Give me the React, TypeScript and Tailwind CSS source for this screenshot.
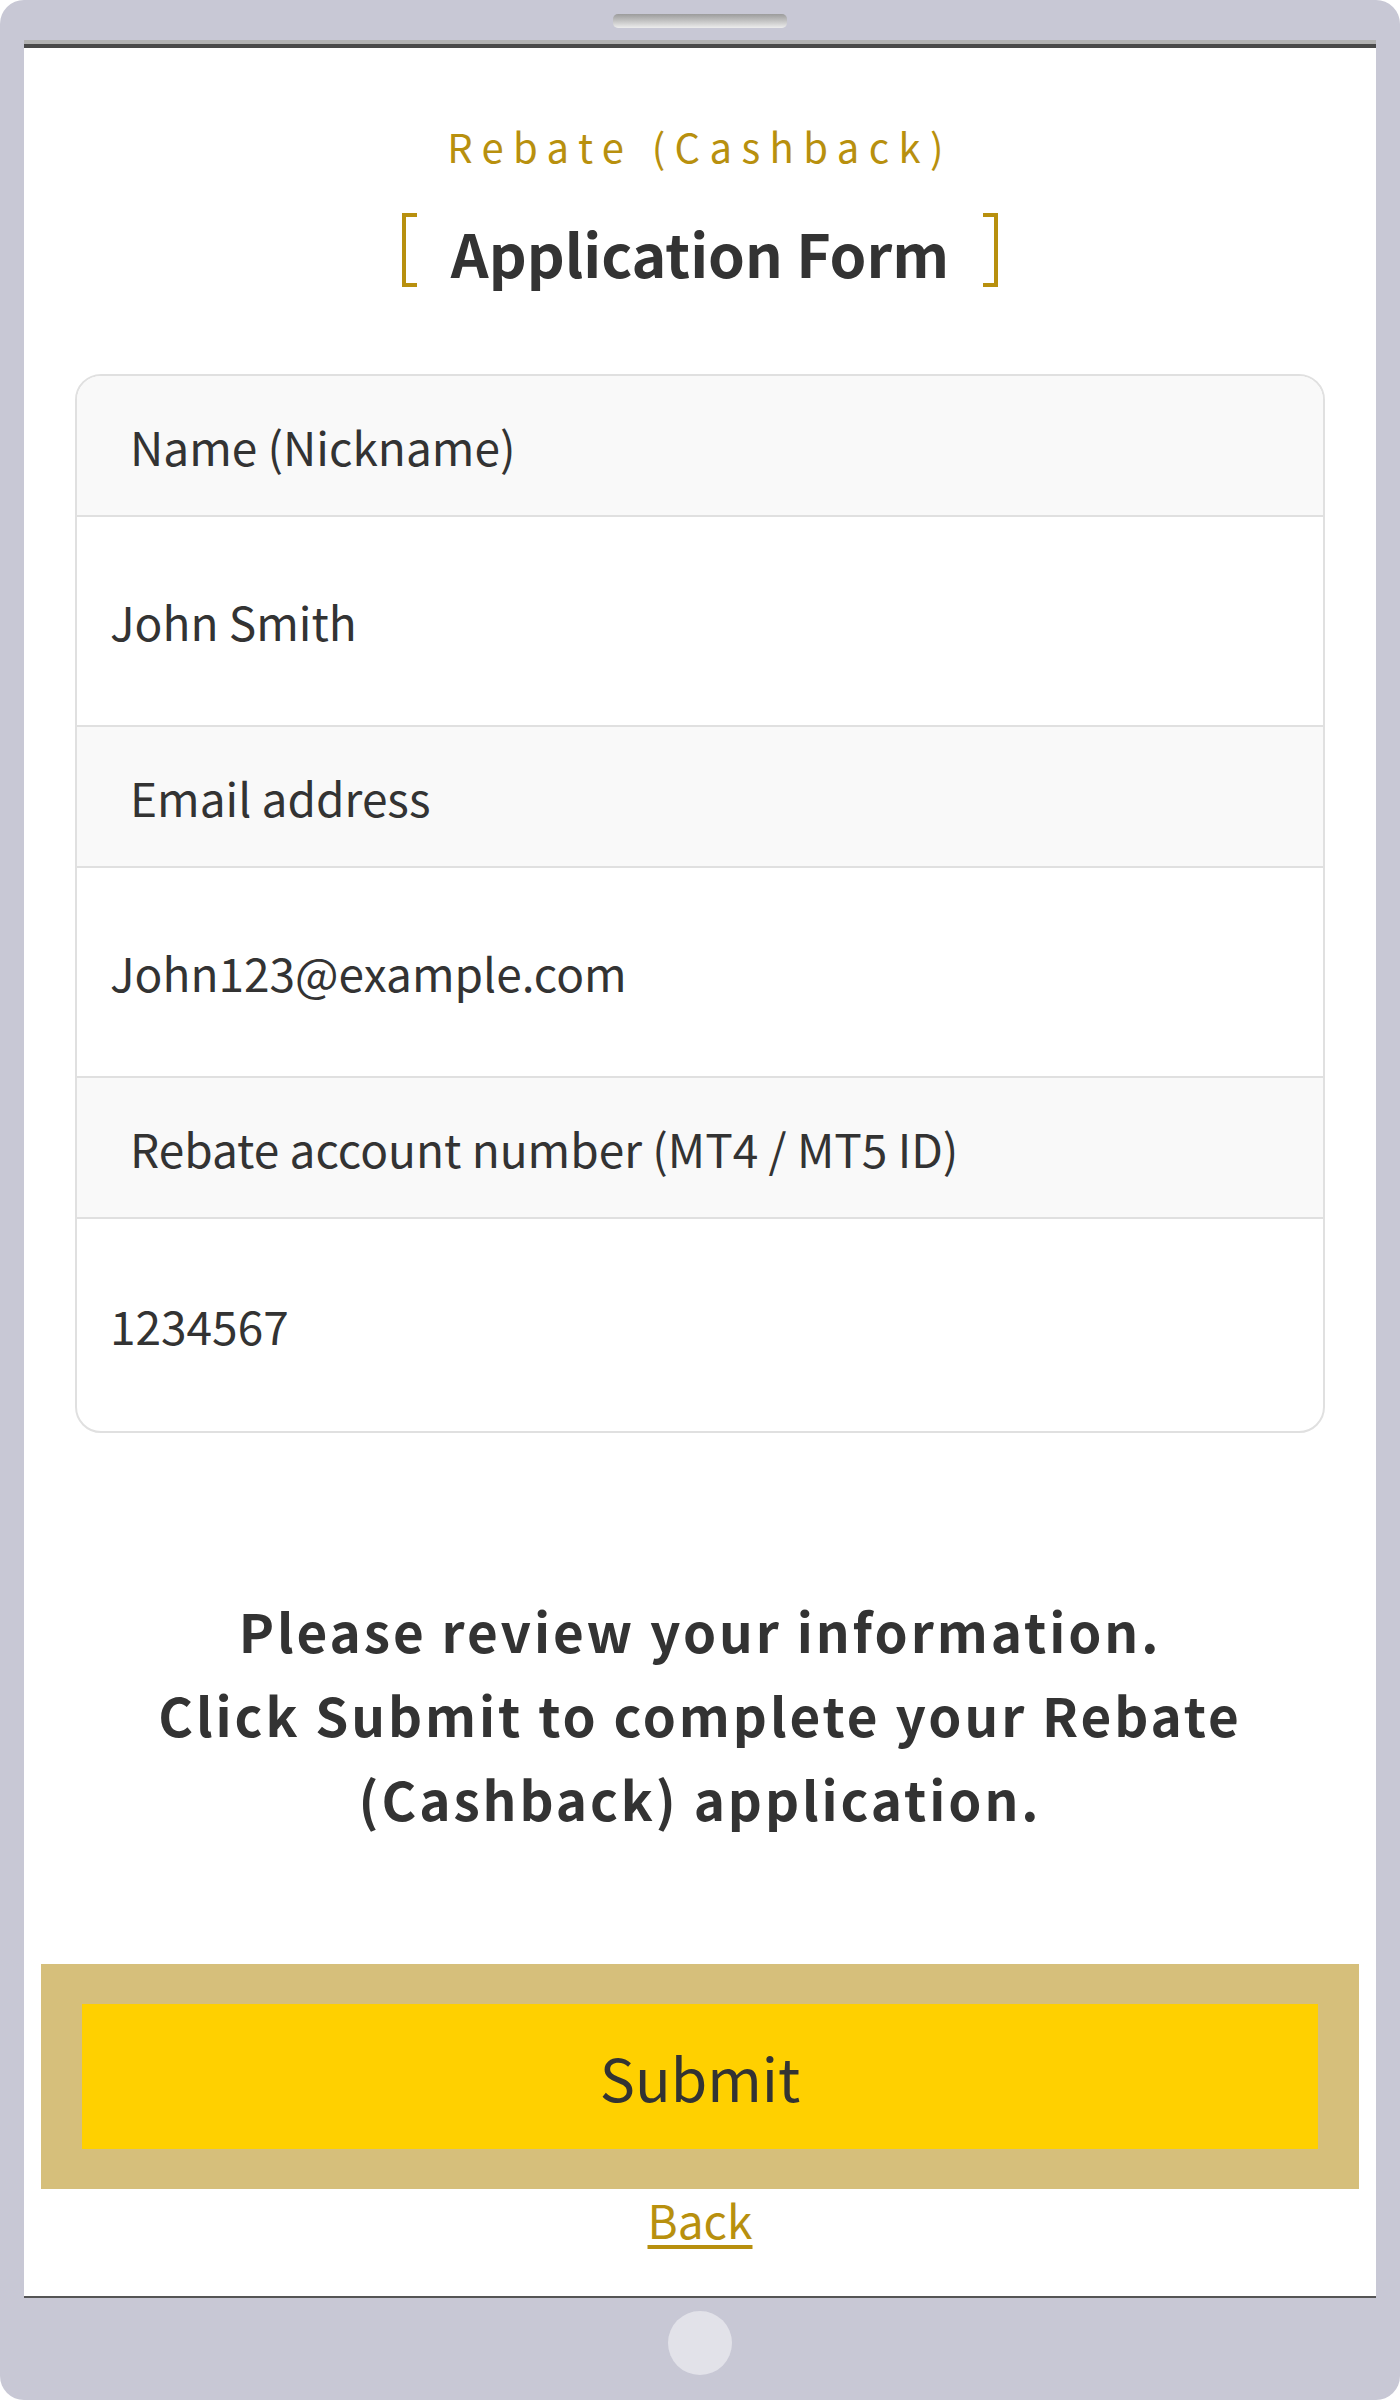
const fields = [
  { label: "Name (Nickname)", value: "John Smith" },
  { label: "Email address", value: "John123@example.com" },
  { label: "Rebate account number (MT4 / MT5 ID)", value: "1234567" },
];

function Bracket({ side }: { side: "left" | "right" }) {
  return (
    <div
      className={
        side === "left"
          ? "w-[15px] h-[74px] border-y-4 border-l-4 border-[#b8900e]"
          : "w-[15px] h-[74px] border-y-4 border-r-4 border-[#b8900e]"
      }
    />
  );
}

export default function App() {
  return (
    <div className="w-[1400px] h-[2400px] bg-[#c8c8d5] rounded-[24px] flex flex-col font-['Noto_Sans_CJK_JP','Noto_Sans',sans-serif] text-[#333333]">
      {/* Top bezel */}
      <div className="h-[40px] flex justify-center pt-[14px]">
        <div className="w-[174px] h-[14px] rounded-[5px] bg-gradient-to-b from-[#9c9c9c] to-[#ededed]" />
      </div>

      {/* Screen */}
      <div className="mx-[24px] flex flex-col">
        <div className="h-[4px] bg-[#b2b2b2]" />
        <div className="h-[4px] bg-[#4a4a4a]" />
        <div className="h-[2248px] bg-white flex flex-col items-center">
          {/* Heading */}
          <p className="mt-[78px] text-[40px] leading-[40px] tracking-[0.235em] text-[#b8900e]">
            Rebate (Cashback)
          </p>
          <div className="mt-[47px] flex items-center gap-[34px]">
            <Bracket side="left" />
            <h1 className="pt-[6px] text-[59px] leading-[62px] font-bold">Application Form</h1>
            <Bracket side="right" />
          </div>

          {/* Form summary */}
          <div className="mt-[87px] w-[1250px] border-2 border-[#e0e0e0] rounded-[26px] overflow-hidden">
            {fields.map((f, i) => (
              <div key={f.label}>
                <div className="h-[141px] bg-[#f9f9f9] border-b-2 border-[#e0e0e0] flex items-center pl-[53px] text-[46px] leading-[60px]">
                  {f.label}
                </div>
                <div
                  className={
                    i < fields.length - 1
                      ? "h-[210px] border-b-2 border-[#e0e0e0] flex items-center pl-[33px] text-[46px] leading-[60px]"
                      : "h-[212px] flex items-center pl-[33px] text-[46px] leading-[60px]"
                  }
                >
                  {f.value}
                </div>
              </div>
            ))}
          </div>

          <p className="mt-[155px] text-center text-[53px] leading-[84px] font-bold tracking-[0.055em]">
            Please review your information.
            <br />
            Click Submit to complete your Rebate
            <br />
            (Cashback) application.
          </p>

          {/* Actions */}
          <div className="mt-[124px] w-[1318px] bg-[#d6bf7b] px-[41px] py-[40px]">
            <button className="w-full h-[145px] bg-[#ffd000] text-[59px] leading-[60px] text-[#333333]">
              Submit
            </button>
          </div>
          <a href="#" className="mt-[7px] text-[46px] leading-[46px] text-[#b8900e] underline underline-offset-[6px]">
            Back
          </a>
        </div>
        <div className="h-[2px] bg-[#555555]" />
      </div>

      {/* Bottom bezel */}
      <div className="flex-1 flex items-start justify-center pt-[13px]">
        <div className="w-[64px] h-[64px] rounded-full bg-[#e2e2e9]" />
      </div>
    </div>
  );
}
